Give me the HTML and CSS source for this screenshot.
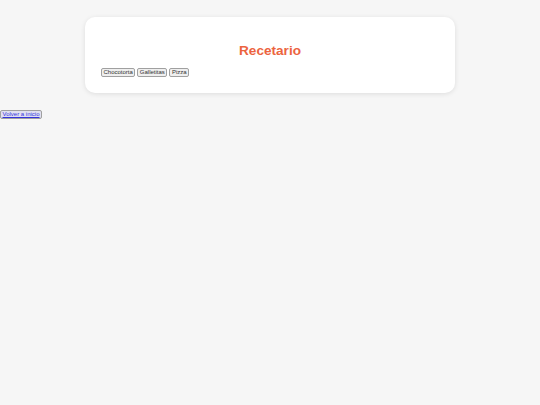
FILE: index.html
```html
<!DOCTYPE html>
<html lang="es">
<head>
<meta charset="utf-8">
<title>Recetario</title>
<link rel="stylesheet" href="styles.css">
</head>
<body>
<div class="card">
  <h1 class="title">Recetario</h1>
  <div class="buttons">
    <button class="btn">Chocotorta</button>
    <button class="btn">Galletitas</button>
    <button class="btn">Pizza</button>
  </div>
</div>
<button class="btn back"><a href="#" class="back-link">Volver a inicio</a></button>
</body>
</html>
```
FILE: styles.css
```css
html, body {
  margin: 0;
  padding: 0;
  background: #f6f6f6;
  font-family: "Liberation Sans", Arial, sans-serif;
}
.card {
  width: 370px;
  box-sizing: border-box;
  margin: 17px auto;
  background: #ffffff;
  border-radius: 10px;
  box-shadow: 0 1px 5px rgba(0,0,0,0.1);
  padding: 16px;
}
.title {
  margin: 9px 0 8px 0;
  text-align: center;
  color: #ec6440;
  font-size: 13.6px;
  line-height: 18px;
  font-weight: bold;
}
.buttons {
  display: flex;
  gap: 2px;
}
.btn {
  font-family: "Liberation Sans", Arial, sans-serif;
  font-size: 6px;
  line-height: 7px;
  padding: 0 1.5px;
  border: 1px solid #a0a0a0;
  border-radius: 2px;
  background: #efefef;
  color: #333;
  margin: 0;
}
.back {
  display: block;
  background: #e0e0f0;
}
.back-link {
  color: #3333dd;
  text-decoration: underline;
}
```
